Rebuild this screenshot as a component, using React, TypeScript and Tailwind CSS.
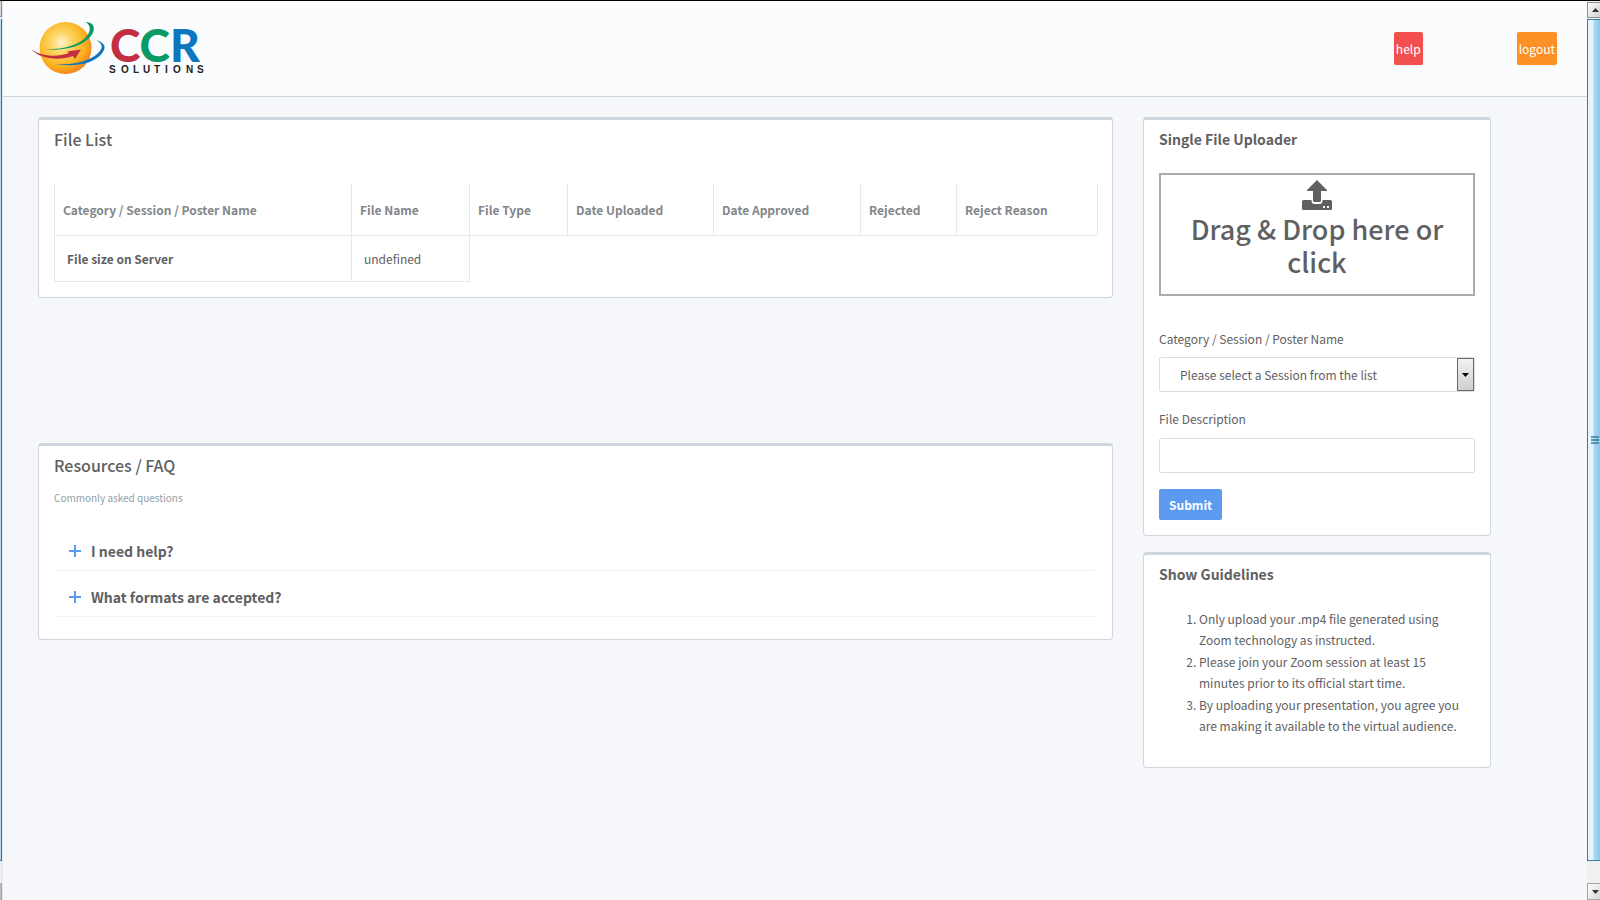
import React from "react";

const columns = [
  { label: "Category / Session / Poster Name", width: "w-[297px]" },
  { label: "File Name", width: "w-[118px]" },
  { label: "File Type", width: "w-[98px]" },
  { label: "Date Uploaded", width: "w-[146px]" },
  { label: "Date Approved", width: "w-[147px]" },
  { label: "Rejected", width: "w-[96px]" },
  { label: "Reject Reason", width: "w-[141px]" },
];

const faqs = ["I need help?", "What formats are accepted?"];

const guidelines = [
  "Only upload your .mp4 file generated using Zoom technology as instructed.",
  "Please join your Zoom session at least 15 minutes prior to its official start time.",
  "By uploading your presentation, you agree you are making it available to the virtual audience.",
];

function Logo() {
  return (
    <svg width="178" height="60" viewBox="30 18 178 60" role="img" aria-label="CCR Solutions">
      <defs>
        <radialGradient id="globe" cx="0.42" cy="0.4" r="0.62">
          <stop offset="0" stopColor="#fff3cf" />
          <stop offset="0.35" stopColor="#fdd45f" />
          <stop offset="0.75" stopColor="#fbb01c" />
          <stop offset="1" stopColor="#f58220" />
        </radialGradient>
      </defs>
      <circle cx="65.500" cy="47" r="26" fill="url(#globe)" />
      <path d="M46 48 C66 49 86 42 89.500 30 C90.500 26 89 23 85.500 21 C92 21 95 25 93.500 30 C90 43 66 51 46 48 Z" fill="#0a9a63" />
      <path d="M55 63 C78 65 98 57 101.500 47 C102.500 44 100 41 96 39 C103 41 106 45 104 49 C98 62 76 67 55 63 Z" fill="#0d76bd" />
      <path d="M31 48 C40 55 56 57 69 52 L67 50.500 L81 48.500 L75 58 L73 55 C58 60 40 58 31 48 Z" fill="#c22f42" />
      <text x="110" y="61" className="font-[Lato] text-[46px] font-black">
        <tspan fill="#c22f42">C</tspan>
        <tspan fill="#0a9a63">C</tspan>
        <tspan fill="#0d76bd">R</tspan>
      </text>
      <text
        x="109 121 133 143 154 165 173 186 197"
        y="72"
        fill="#222222"
        className="font-['Liberation_Sans'] text-[10px] font-bold"
      >
        SOLUTIONS
      </text>
    </svg>
  );
}

function UploadIcon() {
  return (
    <svg width="30" height="30" viewBox="0 0 30 30" fill="#5f6062" aria-hidden="true">
      <path d="M15 0 L25 10 Q25.500 11 24.500 11 H19 V20.500 Q19 22 17.500 22 H12.500 Q11 22 11 20.500 V11 H5.500 Q4.500 11 5 10 Z" />
      <path
        fillRule="evenodd"
        d="M1.500 20 H9.500 V21 Q9.800 23.800 12.500 24 H17.500 Q20.200 23.800 20.500 21 V20 H28.500 Q30 20 30 21.500 V28.500 Q30 30 28.500 30 H1.500 Q0 30 0 28.500 V21.500 Q0 20 1.500 20 Z M21 26 V28 H23 V26 Z M25 26 V28 H27 V26 Z"
      />
    </svg>
  );
}

function Card({ children, className = "" }: { children: React.ReactNode; className?: string }) {
  return (
    <section
      className={`rounded border border-t-3 border-[#d0d6dd] bg-white px-[15px] pt-2 ${className}`}
    >
      {children}
    </section>
  );
}

function LeftEdge() {
  return (
    <div aria-hidden="true" className="flex w-[3px] shrink-0 flex-col border-r border-[#e4e8ec] bg-[#eeeeee]">
      <div className="h-4 border-r border-b border-[#8f8f8f] bg-[#d5d5d5]" />
      <div className="mt-[2px] flex-1 border-r border-b border-[#3c6f93] bg-[#b9dcf0]" />
      <div className="mt-[22px] h-[17px] border-r border-[#a5a5a5] bg-[#bdbdbd]" />
    </div>
  );
}

function ScrollBar() {
  return (
    <div aria-hidden="true" className="flex w-[13px] shrink-0 flex-col bg-[#f0f0f0] pt-px">
      <div className="flex h-4 items-center justify-end border border-r-0 border-[#8f8f8f] bg-linear-to-br from-white to-[#cfcfcf] pr-px">
        <svg width="7" height="4" viewBox="0 0 7 4"><path d="M0 4 L3.500 0 L7 4 Z" fill="#333333" /></svg>
      </div>
      <div className="mt-px flex flex-1 items-center justify-end border border-r-0 border-[#3c7f99] bg-linear-to-r from-[#e6f5fc] from-40% via-[#a9dcf7] via-50% to-[#8fc4e8] pr-px">
        <svg width="8" height="8" viewBox="0 0 8 8"><path d="M0 1 H8 M0 4 H8 M0 7 H8" stroke="#2f7f99" strokeWidth="1.500" /></svg>
      </div>
      <div className="mt-[22px] flex h-[17px] items-center justify-end border border-r-0 border-[#a5a5a5] bg-linear-to-br from-white to-[#d5d5d5] pr-px">
        <svg width="7" height="4" viewBox="0 0 7 4"><path d="M0 0 L3.500 4 L7 0 Z" fill="#333333" /></svg>
      </div>
    </div>
  );
}

export default function App() {
  return (
    <div className="flex min-h-screen border-t border-black bg-[#f5f7fa] font-['Noto_Sans_CJK_SC','Noto_Sans',sans-serif] text-[12px] leading-[21px] text-[#5f6062]">
      <LeftEdge />

      <div className="min-w-0 flex-1">
        <header className="flex h-24 items-center justify-between border-b border-[#d0d5dd] bg-[#fafcfd] pr-[30px] pl-[27px]">
          <Logo />
          <nav className="flex gap-[94px] text-white">
            <a href="#help" className="rounded-xs bg-[#f2504f] px-[2px] py-[6px] shadow-xs">help</a>
            <a href="#logout" className="rounded-xs bg-[#fd9027] px-[2px] py-[6px] shadow-xs">logout</a>
          </nav>
        </header>

        <main className="flex items-start gap-[30px] pt-5 pr-24 pb-8 pl-[35px]">
          <div className="flex min-w-0 flex-1 flex-col gap-[145px]">
            <Card className="pb-[15px]">
              <h2 className="text-[16px] leading-[22px] font-medium">File List</h2>
              <table className="mt-[34px] w-full table-fixed border-collapse text-left">
                <thead>
                  <tr className="h-[51px] text-[#83878b]">
                    {columns.map((col) => (
                      <th key={col.label} className={`${col.width} border border-t-0 border-[#e8e9eb] px-2 font-bold`}>
                        {col.label}
                      </th>
                    ))}
                  </tr>
                </thead>
                <tbody>
                  <tr className="h-[46px]">
                    <th className="border border-[#e8e9eb] px-3 font-bold">File size on Server</th>
                    <td className="border border-[#e8e9eb] px-3">undefined</td>
                  </tr>
                </tbody>
              </table>
            </Card>

            <Card className="pb-[22px]">
              <h2 className="text-[16px] leading-[22px] font-medium">Resources / FAQ</h2>
              <p className="mt-[11px] text-[10px] text-[#93a0a8]">Commonly asked questions</p>
              <ul className="mt-[17px] px-[2px]">
                {faqs.map((question) => (
                  <li key={question} className="border-b border-[#eff1f2]">
                    <button className="flex h-[45px] w-full items-center gap-[10px] px-[13px] pt-2 text-left text-[14px] font-bold">
                      <svg width="12" height="12" viewBox="0 0 12 12" stroke="#5c9aef" strokeWidth="2" aria-hidden="true">
                        <path d="M6 0 V12 M0 6 H12" />
                      </svg>
                      {question}
                    </button>
                  </li>
                ))}
              </ul>
            </Card>
          </div>

          <div className="flex w-[348px] shrink-0 flex-col gap-4">
            <Card className="pb-[15px]">
              <h2 className="text-[14px] leading-[22px] font-bold">Single File Uploader</h2>
              <button className="mt-[23px] flex h-[123px] w-full flex-col items-center gap-[2px] border-2 border-[#a9abad] px-6 pt-[5px] text-[27px] leading-[33px] font-medium">
                <UploadIcon />
                Drag &amp; Drop here or click
              </button>

              <form onSubmit={(e) => e.preventDefault()}>
                <label htmlFor="session" className="mt-8 block">Category / Session / Poster Name</label>
                <div className="relative mt-2">
                  <select id="session" className="block h-[35px] w-full appearance-none rounded-xs border border-[#dcdfe2] bg-white pr-6 pl-5">
                    <option>Please select a Session from the list</option>
                  </select>
                  <span className="pointer-events-none absolute inset-y-px right-px flex w-[17px] items-center justify-center border border-[#6b6b6b] bg-linear-to-b from-[#f2f2f2] to-[#cfcfcf]">
                    <svg width="7" height="4" viewBox="0 0 7 4" aria-hidden="true"><path d="M0 0 H7 L3.500 4 Z" fill="#000000" /></svg>
                  </span>
                </div>

                <label htmlFor="description" className="mt-4 block">File Description</label>
                <input id="description" type="text" className="mt-[9px] block h-[35px] w-full rounded-xs border border-[#dcdfe2] bg-white px-3" />

                <button type="submit" className="mt-4 block h-[31px] rounded-xs bg-[#5c9aef] px-[10px] font-bold text-white">
                  Submit
                </button>
              </form>
            </Card>

            <Card className="pb-[31px]">
              <h2 className="text-[14px] leading-[22px] font-bold">Show Guidelines</h2>
              <ol className="mt-[23px] flex list-decimal flex-col gap-px pr-3 pl-10">
                {guidelines.map((text) => (
                  <li key={text}>{text}</li>
                ))}
              </ol>
            </Card>
          </div>
        </main>
      </div>

      <ScrollBar />
    </div>
  );
}
